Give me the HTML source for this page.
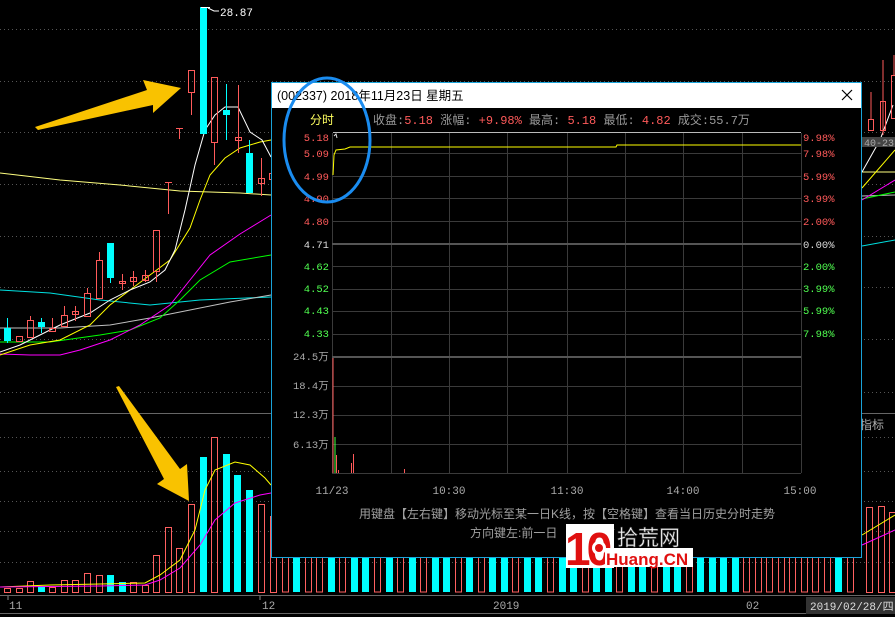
<!DOCTYPE html>
<html><head><meta charset="utf-8"><style>
html,body{margin:0;padding:0;background:#000;width:895px;height:617px;overflow:hidden}
svg{display:block}
text{font-family:"Liberation Mono","Noto Sans CJK SC",monospace}
.s{font-family:"Liberation Sans","Noto Sans CJK SC",sans-serif}
</style></head><body>
<svg width="895" height="617" viewBox="0 0 895 617" xmlns="http://www.w3.org/2000/svg">
<rect width="895" height="617" fill="#000"/>
<g stroke="#555" stroke-width="1" stroke-dasharray="1,3">
<line x1="0" y1="29.5" x2="895" y2="29.5"/><line x1="0" y1="81.5" x2="895" y2="81.5"/>
<line x1="0" y1="132.5" x2="895" y2="132.5"/><line x1="0" y1="184.5" x2="895" y2="184.5"/>
<line x1="0" y1="236.5" x2="895" y2="236.5"/><line x1="0" y1="287.5" x2="895" y2="287.5"/>
<line x1="0" y1="339.5" x2="895" y2="339.5"/><line x1="0" y1="392.5" x2="895" y2="392.5"/>
<line x1="0" y1="437.5" x2="895" y2="437.5"/><line x1="0" y1="471.5" x2="895" y2="471.5"/>
<line x1="0" y1="501.5" x2="895" y2="501.5"/><line x1="0" y1="531.5" x2="895" y2="531.5"/>
<line x1="0" y1="562.5" x2="895" y2="562.5"/>
</g>
<line x1="0" y1="413.5" x2="895" y2="413.5" stroke="#666"/>
<line x1="0" y1="595.5" x2="895" y2="595.5" stroke="#666"/>
<line x1="0" y1="613.5" x2="895" y2="613.5" stroke="#666"/>
<g fill="none" stroke-width="1">
<polyline stroke="#ffff80" points="0,173 60,180 120,185 180,191 240,193 271,195"/>
<polyline stroke="#00e0e0" points="0,290 50,293 100,300 150,305 200,300 271,297"/>
<polyline stroke="#c0c0c0" points="0,328 60,328 110,325 150,318 190,310 230,302 271,295"/>
<polyline stroke="#00ff00" points="0,342 50,342 100,335 130,330 160,318 180,300 200,280 230,262 271,255"/>
<polyline stroke="#ff00ff" points="0,354 30,355 60,355 80,350 110,340 140,325 170,305 190,280 210,255 240,234 271,215"/>
<polyline stroke="#ffff00" points="0,355 30,345 60,340 90,325 110,305 130,290 150,275 170,260 190,228 200,200 210,175 225,158 240,148 260,142 271,140"/>
<polyline stroke="#ffffff" points="0,352 20,345 40,335 60,325 90,313 110,300 130,290 150,282 165,270 175,250 185,210 195,165 205,130 215,115 225,107 238,107 250,132 262,140 271,157"/>
<polyline stroke="#ffff80" points="862,172 895,172"/>
<polyline stroke="#00e0e0" points="862,246 895,240"/>
<polyline stroke="#c0c0c0" points="862,196 895,195"/>
<polyline stroke="#00ff00" points="862,199 895,192"/>
<polyline stroke="#ff00ff" points="862,200 895,180"/>
<polyline stroke="#ffff00" points="862,188 895,150"/>
<polyline stroke="#ffffff" points="862,172 880,140 893,105"/>
</g>
<g stroke="#ff5a5a" fill="none">
<line x1="7.5" y1="318" x2="7.5" y2="343" stroke="#00ffff"/>
<rect x="4" y="328" width="7" height="13" fill="#00ffff" stroke="none"/>
<rect x="16.5" y="336.5" width="6" height="5"/><rect x="27.5" y="320.5" width="6" height="17"/><line x1="30.5" y1="316" x2="30.5" y2="320"/>
<line x1="41.5" y1="318" x2="41.5" y2="333" stroke="#00ffff"/><rect x="38" y="322" width="7" height="5" fill="#00ffff" stroke="none"/>
<rect x="49.5" y="328.5" width="6" height="3"/><line x1="52.5" y1="318" x2="52.5" y2="328"/>
<rect x="61.5" y="315.5" width="6" height="11"/><line x1="64.5" y1="306" x2="64.5" y2="315"/>
<rect x="72.5" y="311.5" width="6" height="3"/><line x1="75.5" y1="306" x2="75.5" y2="321"/>
<rect x="84.5" y="293.5" width="6" height="23"/><line x1="87.5" y1="288" x2="87.5" y2="293"/>
<rect x="96.5" y="260.5" width="6" height="38"/><line x1="99.5" y1="252" x2="99.5" y2="260"/>
<rect x="107" y="243" width="7" height="35" fill="#00ffff" stroke="none"/><line x1="110.5" y1="278" x2="110.5" y2="283" stroke="#00ffff"/>
<rect x="119.5" y="281.5" width="6" height="2"/><line x1="122.5" y1="274" x2="122.5" y2="290"/>
<rect x="130.5" y="277.5" width="6" height="4"/><line x1="133.5" y1="271" x2="133.5" y2="286"/>
<rect x="142.5" y="275.5" width="6" height="5"/><line x1="145.5" y1="270" x2="145.5" y2="282"/>
<rect x="153.5" y="230.5" width="6" height="41"/><line x1="156.5" y1="271" x2="156.5" y2="282"/>
<line x1="168.5" y1="182" x2="168.5" y2="214"/><line x1="165" y1="182.5" x2="172" y2="182.5"/>
<line x1="179.5" y1="128" x2="179.5" y2="139"/><line x1="176" y1="128.5" x2="183" y2="128.5"/>
<rect x="188.5" y="70.5" width="6" height="22"/><line x1="191.5" y1="92" x2="191.5" y2="115"/>
<rect x="200" y="7" width="7" height="127" fill="#00ffff" stroke="none"/>
<rect x="211.5" y="77.5" width="6" height="65"/><line x1="214.5" y1="142" x2="214.5" y2="165"/>
<line x1="226.5" y1="84" x2="226.5" y2="140" stroke="#00ffff"/><rect x="223" y="110" width="7" height="5" fill="#00ffff" stroke="none"/>
<rect x="235.5" y="137.5" width="6" height="3"/><line x1="238.5" y1="85" x2="238.5" y2="153"/>
<line x1="249.5" y1="140" x2="249.5" y2="153" stroke="#00ffff"/><rect x="246" y="153" width="7" height="40" fill="#00ffff" stroke="none"/>
<rect x="258.5" y="178.5" width="6" height="5"/><line x1="261.5" y1="158" x2="261.5" y2="196"/>
<rect x="269.5" y="173.5" width="6" height="6"/>
<rect x="868.5" y="119.5" width="5" height="11"/><line x1="871" y1="92" x2="871" y2="119"/>
<rect x="880.5" y="101.5" width="5" height="29"/><line x1="883" y1="60" x2="883" y2="135"/>
<rect x="891.5" y="75.5" width="5" height="43"/><line x1="894" y1="55" x2="894" y2="75"/>
</g>
<line x1="201" y1="7.5" x2="210" y2="7.5" stroke="#fff"/>
<path d="M208,8 L214,11 L219,11" stroke="#fff" fill="none"/>
<text x="220" y="16" fill="#fff" font-size="11">28.87</text>
<rect x="862" y="137" width="33" height="10" fill="#444"/>
<text x="864" y="146" fill="#aaa" font-size="10">40-23</text>
<text x="860" y="429" fill="#aaa" font-size="12" class="s">指标</text>
<g stroke="#ff6060" fill="none">
<rect x="4.5" y="588.5" width="6" height="4"/><rect x="16.5" y="588.5" width="6" height="4"/><rect x="27.5" y="581.5" width="6" height="11"/>
<rect x="49.5" y="587.5" width="6" height="5"/><rect x="61.5" y="580.5" width="6" height="12"/><rect x="72.5" y="580.5" width="6" height="12"/>
<rect x="84.5" y="573.5" width="6" height="19"/><rect x="96.5" y="575.5" width="6" height="17"/>
<rect x="130.5" y="582.5" width="6" height="10"/><rect x="142.5" y="585.5" width="6" height="7"/><rect x="153.5" y="555.5" width="6" height="37"/>
<rect x="165.5" y="527.5" width="6" height="65"/><rect x="176.5" y="548.5" width="6" height="44"/><rect x="188.5" y="504.5" width="6" height="88"/>
<rect x="211.5" y="437.5" width="6" height="155"/><rect x="258.5" y="504.5" width="6" height="88"/><rect x="270.5" y="516.5" width="6" height="76"/>
<rect x="866.5" y="507.5" width="6" height="85"/><rect x="878.5" y="506.5" width="6" height="86"/><rect x="889.5" y="512.5" width="6" height="80"/>
</g>
<g fill="#00ffff">
<rect x="38" y="586" width="7" height="6"/><rect x="107" y="575" width="7" height="17"/><rect x="119" y="582" width="7" height="10"/>
<rect x="200" y="457" width="7" height="135"/><rect x="223" y="454" width="7" height="138"/><rect x="234" y="475" width="7" height="117"/><rect x="246" y="490" width="7" height="102"/>
</g>
<g stroke="#ff6060" fill="none">
<rect x="282.5" y="550" width="6" height="42"/><rect x="305.5" y="550" width="6" height="42"/><rect x="316.5" y="550" width="6" height="42"/>
<rect x="339.5" y="550" width="6" height="42"/><rect x="374.5" y="550" width="6" height="42"/><rect x="397.5" y="550" width="6" height="42"/>
<rect x="420.5" y="550" width="6" height="42"/><rect x="455.5" y="550" width="6" height="42"/><rect x="478.5" y="550" width="6" height="42"/>
<rect x="512.5" y="550" width="6" height="42"/><rect x="547.5" y="550" width="6" height="42"/><rect x="582.5" y="550" width="6" height="42"/>
<rect x="616.5" y="550" width="6" height="42"/><rect x="651.5" y="550" width="6" height="42"/><rect x="686.5" y="550" width="6" height="42"/>
<rect x="743.5" y="550" width="6" height="42"/><rect x="755.5" y="550" width="6" height="42"/><rect x="766.5" y="550" width="6" height="42"/>
<rect x="778.5" y="550" width="6" height="42"/><rect x="789.5" y="550" width="6" height="42"/><rect x="801.5" y="550" width="6" height="42"/>
<rect x="812.5" y="550" width="6" height="42"/><rect x="824.5" y="550" width="6" height="42"/><rect x="847.5" y="550" width="6" height="42"/>
</g>
<g fill="#00ffff">
<rect x="293" y="550" width="7" height="42"/><rect x="328" y="550" width="7" height="42"/><rect x="351" y="550" width="7" height="42"/><rect x="362" y="550" width="7" height="42"/>
<rect x="386" y="550" width="7" height="42"/><rect x="409" y="550" width="7" height="42"/><rect x="432" y="550" width="7" height="42"/><rect x="443" y="550" width="7" height="42"/>
<rect x="466" y="550" width="7" height="42"/><rect x="489" y="550" width="7" height="42"/><rect x="501" y="550" width="7" height="42"/><rect x="524" y="550" width="7" height="42"/>
<rect x="535" y="550" width="7" height="42"/><rect x="559" y="550" width="7" height="42"/><rect x="570" y="550" width="7" height="42"/><rect x="593" y="550" width="7" height="42"/>
<rect x="605" y="550" width="7" height="42"/><rect x="628" y="550" width="7" height="42"/><rect x="639" y="550" width="7" height="42"/><rect x="663" y="550" width="7" height="42"/>
<rect x="674" y="550" width="7" height="42"/><rect x="697" y="550" width="7" height="42"/><rect x="709" y="550" width="7" height="42"/><rect x="720" y="550" width="7" height="42"/>
<rect x="732" y="550" width="7" height="42"/><rect x="835" y="550" width="7" height="42"/>
</g>
<g fill="none">
<polyline stroke="#ffff00" points="0,587 50,585 100,584 145,583 160,575 180,560 195,530 205,490 215,470 235,462 250,465 265,478 271,485"/>
<polyline stroke="#ff00ff" points="0,587 100,586 145,585 160,580 180,568 200,545 215,520 235,503 260,495 271,493"/>
<polyline stroke="#ffff00" points="862,535 895,515"/>
<polyline stroke="#ff00ff" points="862,545 895,530"/>
</g>
<text x="9" y="609" fill="#aaa" font-size="11">11</text>
<text x="262" y="609" fill="#aaa" font-size="11">12</text>
<text x="493" y="609" fill="#aaa" font-size="11">2019</text>
<text x="746" y="609" fill="#aaa" font-size="11">02</text>
<line x1="8" y1="596" x2="8" y2="600" stroke="#888"/><line x1="260" y1="596" x2="260" y2="600" stroke="#888"/>
<rect x="806" y="597" width="89" height="17" fill="#333"/>
<text x="810" y="610" fill="#ddd" font-size="11">2019/02/28/四</text>
<polygon fill="#f9c200" points="35,127 38,130 153,105 153,113 181,88 143,80 147,90"/>
<polygon fill="#f9c200" points="116,387 119,386 180,469 187,464 189,501 157,484 164,479"/>
<rect x="271.5" y="82.5" width="590" height="475" fill="#000" stroke="#1aa3d9"/>
<rect x="272" y="83" width="589" height="25" fill="#fff"/>
<text x="277" y="100" fill="#000" font-size="12.5" class="s">(002337) 2018年11月23日 星期五</text>
<path d="M842,90 L852,100 M852,90 L842,100" stroke="#000" stroke-width="1.2"/>
<text x="310" y="124" fill="#ffff60" font-size="12" class="s">分时</text>
<g font-size="12" class="s">
<text x="373" y="124" fill="#999">收盘:<tspan fill="#ff5a5a">5.18</tspan> 涨幅: <tspan fill="#ff5a5a">+9.98%</tspan> 最高: <tspan fill="#ff5a5a">5.18</tspan> 最低: <tspan fill="#ff5a5a">4.82</tspan> 成交:55.7万</text>
</g>
<g stroke="#3a3a3a">
<line x1="332" y1="153.5" x2="801" y2="153.5"/><line x1="332" y1="176.5" x2="801" y2="176.5"/><line x1="332" y1="198.5" x2="801" y2="198.5"/><line x1="332" y1="221.5" x2="801" y2="221.5"/>
<line x1="332" y1="266.5" x2="801" y2="266.5"/><line x1="332" y1="289.5" x2="801" y2="289.5"/><line x1="332" y1="311.5" x2="801" y2="311.5"/><line x1="332" y1="334.5" x2="801" y2="334.5"/>
<line x1="332" y1="386.5" x2="801" y2="386.5"/><line x1="332" y1="415.5" x2="801" y2="415.5"/><line x1="332" y1="444.5" x2="801" y2="444.5"/><line x1="332" y1="473.5" x2="801" y2="473.5"/>
<line x1="332.5" y1="133" x2="332.5" y2="473"/><line x1="391.5" y1="133" x2="391.5" y2="473"/><line x1="449.5" y1="133" x2="449.5" y2="473"/><line x1="507.5" y1="133" x2="507.5" y2="473"/>
<line x1="567.5" y1="133" x2="567.5" y2="473"/><line x1="625.5" y1="133" x2="625.5" y2="473"/><line x1="683.5" y1="133" x2="683.5" y2="473"/><line x1="742.5" y1="133" x2="742.5" y2="473"/><line x1="801.5" y1="133" x2="801.5" y2="473"/>
</g>
<line x1="332" y1="244" x2="801" y2="244" stroke="#555" stroke-width="2"/>
<line x1="332" y1="357" x2="801" y2="357" stroke="#555" stroke-width="2"/>
<line x1="333" y1="132.5" x2="801" y2="132.5" stroke="#bbb"/>
<polyline fill="none" stroke="#ffff00" points="333,175 334,155 336,150 345,149 350,147 616,147 617,145 801,145"/>
<path d="M334,136 L336,134 L337,138" stroke="#ddd" fill="none"/>
<g stroke="#ff5a5a">
<line x1="333" y1="358" x2="333" y2="473"/><line x1="336.5" y1="455" x2="336.5" y2="473"/><line x1="338.5" y1="470" x2="338.5" y2="473"/>
<line x1="351.5" y1="463" x2="351.5" y2="473"/><line x1="353.5" y1="454" x2="353.5" y2="473"/><line x1="404.5" y1="469" x2="404.5" y2="473"/>
</g>
<line x1="335" y1="437" x2="335" y2="473" stroke="#40ff40"/>
<g font-size="10.5" text-anchor="end">
<text x="329" y="141" fill="#ff5a5a">5.18</text><text x="329" y="157" fill="#ff5a5a">5.09</text><text x="329" y="180" fill="#ff5a5a">4.99</text>
<text x="329" y="202" fill="#ff5a5a">4.90</text><text x="329" y="225" fill="#ff5a5a">4.80</text><text x="329" y="248" fill="#ddd">4.71</text>
<text x="329" y="270" fill="#50ff50">4.62</text><text x="329" y="292" fill="#50ff50">4.52</text><text x="329" y="314" fill="#50ff50">4.43</text><text x="329" y="337" fill="#50ff50">4.33</text>
</g>
<g font-size="10.5">
<text x="803" y="141" fill="#ff5a5a">9.98%</text><text x="803" y="157" fill="#ff5a5a">7.98%</text><text x="803" y="180" fill="#ff5a5a">5.99%</text>
<text x="803" y="202" fill="#ff5a5a">3.99%</text><text x="803" y="225" fill="#ff5a5a">2.00%</text><text x="803" y="248" fill="#ddd">0.00%</text>
<text x="803" y="270" fill="#50ff50">2.00%</text><text x="803" y="292" fill="#50ff50">3.99%</text><text x="803" y="314" fill="#50ff50">5.99%</text><text x="803" y="337" fill="#50ff50">7.98%</text>
</g>
<g font-size="10.5" fill="#aaa">
<text x="293" y="360">24.5<tspan class="s">万</tspan></text><text x="293" y="389">18.4<tspan class="s">万</tspan></text>
<text x="293" y="418">12.3<tspan class="s">万</tspan></text><text x="293" y="448">6.13<tspan class="s">万</tspan></text>
</g>
<g font-size="11" fill="#aaa" text-anchor="middle">
<text x="332" y="494">11/23</text><text x="449" y="494">10:30</text><text x="567" y="494">11:30</text><text x="683" y="494">14:00</text><text x="800" y="494">15:00</text>
</g>
<text x="567" y="518" fill="#a0a0a0" font-size="12" text-anchor="middle" class="s">用键盘【左右键】移动光标至某一日K线，按【空格键】查看当日历史分时走势</text>
<text x="470" y="537" fill="#a0a0a0" font-size="12" class="s">方向键左:前一日</text>
<text x="603" y="537" fill="#a0a0a0" font-size="12" class="s">右</text>
<rect x="566" y="524" width="48" height="44" fill="#fff"/>
<text x="565" y="565" fill="#e01010" font-size="46" font-weight="bold" class="s" letter-spacing="-4">10</text>
<circle cx="599" cy="548" r="7" fill="#fff"/>
<circle cx="599" cy="548" r="4" fill="#e01010"/>
<text x="617" y="545" fill="#fff" stroke="#555" stroke-width="0.6" font-size="21" class="s">拾荒网</text>
<rect x="605" y="548" width="88" height="19" fill="#fff"/>
<text x="606" y="565" fill="#e01010" font-size="17" font-weight="bold" class="s">Huang.CN</text>
<ellipse cx="327" cy="140" rx="43" ry="62" fill="none" stroke="#1a8cf0" stroke-width="3"/>
</svg>
</body></html>
